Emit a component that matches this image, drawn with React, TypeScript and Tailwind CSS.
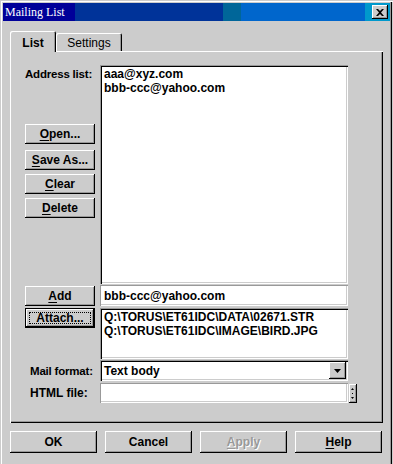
import React from "react";

const raised = "shadow-[inset_-1px_-1px_0_#000,inset_1px_1px_0_#fff,inset_-2px_-2px_0_#999]";
const sunken = "shadow-[inset_1px_1px_0_#999,inset_2px_2px_0_#000,inset_-1px_-1px_0_#fff,inset_-2px_-2px_0_#ccc]";
const sunkenSoft = "shadow-[inset_1px_1px_0_#999,inset_-1px_-1px_0_#fff,inset_-2px_-2px_0_#ccc]";

function Btn({ children, className = "" }: { children: React.ReactNode; className?: string }) {
  return (
    <div className={`flex items-center justify-center bg-[#cccccc] ${raised} ${className}`}>{children}</div>
  );
}

function U({ c }: { c: string }) {
  return <span className="underline underline-offset-[2px]">{c}</span>;
}

export default function App() {
  return (
    <div className="relative flex h-[464px] w-[393px] flex-col overflow-hidden bg-[#cccccc] pl-[3px] pr-[3px] pt-[3px] font-['Liberation_Sans',Arial,sans-serif] text-[12px] font-bold leading-[14px] text-black shadow-[inset_1px_1px_0_#ccc,inset_2px_2px_0_#fff,inset_-1px_0_0_#ccc,inset_-2px_0_0_#000,inset_-3px_0_0_#999]">
      {/* title bar */}
      <div className="flex h-[18px] w-[387px] items-center justify-between bg-[linear-gradient(90deg,#000099_0px,#000099_72px,#003399_72px,#003399_220px,#006699_220px,#006699_238px,#0066cc_238px,#0066cc_362px,#0099cc_362px)] pl-[2px] pr-[2px]">
        <span className="font-['Liberation_Serif','Times_New_Roman',serif] text-[12px] font-normal leading-[14px] text-white">
          Mailing List
        </span>
        <Btn className="h-[14px] w-[16px]">
          <svg width="8" height="7" viewBox="0 0 8 7">
            <path d="M0 0h2l2 2 2-2h2L5 3.5 8 7H6L4 5 2 7H0l3-3.5z" fill="#000" />
          </svg>
        </Btn>
      </div>

      <div className="flex flex-col pl-[7px]">
        {/* tabs */}
        <div className="mt-[10px] flex h-[20px] items-end">
          <div className="relative z-10 -mb-[1px] flex h-[21px] w-[46px] items-center justify-center rounded-t-[2px] bg-[#cccccc] pt-[2px] shadow-[inset_1px_1px_0_#fff,inset_-1px_0_0_#000,inset_-2px_0_0_#999]">
            List
          </div>
          <div className="flex h-[18px] w-[66px] items-center justify-center rounded-t-[2px] pt-[2px] font-normal shadow-[inset_1px_1px_0_#fff,inset_-1px_0_0_#000,inset_-2px_0_0_#999]">
            Settings
          </div>
        </div>

        {/* panel */}
        <div className="flex h-[372px] w-[373px] flex-col whitespace-nowrap pl-[15px] pt-[14px] shadow-[inset_1px_1px_0_#fff,inset_-1px_-1px_0_#000,inset_-2px_-2px_0_#999]">
          <div className="flex gap-[5px]">
            <div className="flex w-[70px] flex-col">
              <div className="mt-[2px] text-[11.5px] tracking-[-0.2px]">Address list:</div>
              <Btn className="mt-[43px] h-[20px]">
                <span><U c="O" />pen...</span>
              </Btn>
              <Btn className="mt-[6px] h-[20px]">
                <span><U c="S" />ave As...</span>
              </Btn>
              <Btn className="mt-[4px] h-[20px]">
                <span><U c="C" />lear</span>
              </Btn>
              <Btn className="mt-[4px] h-[20px]">
                <span><U c="D" />elete</span>
              </Btn>
            </div>
            <div className={`h-[219px] w-[248px] bg-white pl-[4px] pt-[2px] ${sunken}`}>
              <div>aaa@xyz.com</div>
              <div>bbb-ccc@yahoo.com</div>
            </div>
          </div>

          <div className="mt-[1px] flex items-center gap-[5px]">
            <Btn className="h-[20px] w-[70px]">
              <span><U c="A" />dd</span>
            </Btn>
            <div className={`flex h-[21px] w-[248px] items-center bg-white pl-[4px] ${sunkenSoft}`}>
              bbb-ccc@yahoo.com
            </div>
          </div>

          <div className="mt-[2px] flex items-start gap-[5px]">
            <div className="relative flex h-[20px] w-[70px] items-center justify-center bg-[#cccccc] shadow-[inset_0_0_0_1px_#000,inset_-2px_-2px_0_#000,inset_2px_2px_0_#fff,inset_-3px_-3px_0_#999]">
              <span>Attach...</span>
              <div className="absolute inset-[4px] border border-dotted border-black" />
            </div>
            <div className={`h-[51px] w-[248px] bg-white pl-[4px] pt-[2px] ${sunken}`}>
              <div>Q:\TORUS\ET61IDC\DATA\02671.STR</div>
              <div>Q:\TORUS\ET61IDC\IMAGE\BIRD.JPG</div>
            </div>
          </div>

          <div className="mt-[1px] flex items-center gap-[5px]">
            <div className="w-[70px] pl-[5px] text-[11.5px] tracking-[-0.2px]">Mail format:</div>
            <div className={`flex h-[21px] w-[248px] items-center justify-between bg-white pl-[4px] pr-[2px] ${sunken}`}>
              <span>Text body</span>
              <Btn className="h-[17px] w-[17px]">
                <svg width="7" height="4" viewBox="0 0 7 4">
                  <path d="M0 0h7L3.5 4z" fill="#000" />
                </svg>
              </Btn>
            </div>
          </div>

          <div className="mt-[2px] flex items-center">
            <div className="w-[75px] pl-[5px]">HTML file:</div>
            <div className={`h-[20px] w-[248px] bg-white ${sunkenSoft}`} />
            <Btn className="ml-[1px] h-[19px] w-[8px]">
              <svg width="4" height="13" viewBox="0 0 4 13">
                <path d="M0 3h3L1.5 1z" fill="#000" />
                <rect x="1" y="6" width="1" height="1" fill="#000" />
                <path d="M0 10h3L1.5 12z" fill="#000" />
              </svg>
            </Btn>
          </div>
        </div>

        {/* bottom buttons */}
        <div className="mt-[8px] flex gap-[8px]">
          <Btn className="h-[22px] w-[87px]">OK</Btn>
          <Btn className="h-[22px] w-[87px]">Cancel</Btn>
          <Btn className="h-[22px] w-[87px]">
            <span className="text-[#999] [text-shadow:1px_1px_0_#fff]"><U c="A" />pply</span>
          </Btn>
          <Btn className="h-[22px] w-[87px]">
            <span><U c="H" />elp</span>
          </Btn>
        </div>
      </div>
    </div>
  );
}
